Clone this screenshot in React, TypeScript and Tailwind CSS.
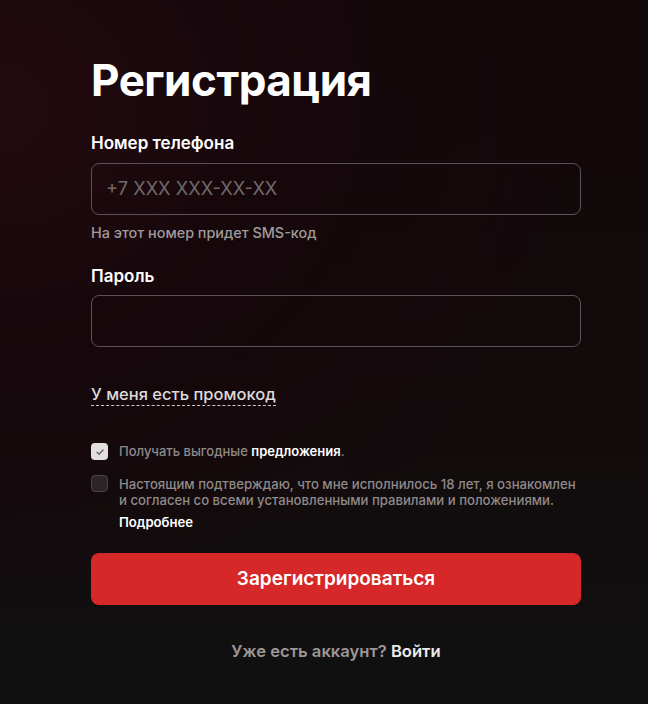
import React from "react";

export default function App() {
  return (
    <div
      className="min-h-[704px] w-full text-white"
      style={{
        fontFamily: "Inter, 'Noto Sans', sans-serif",
        background:
          "radial-gradient(ellipse 90% 75% at 0% 15%, #230a10 0%, #16070b 45%, rgba(17,17,17,0) 100%), linear-gradient(180deg, #120709 0%, #120a0b 55%, #111111 100%)",
      }}
    >
      <div className="pl-[91px] pt-[52px] w-[581px]">
        <h1 className="text-[44px] leading-[56px] font-bold tracking-[-0.5px]">Регистрация</h1>

        <div className="mt-[24px] text-[17px] leading-[22px] font-semibold">Номер телефона</div>
        <div className="mt-[9px] h-[52px] rounded-[8px] border border-[#5a5254] flex items-center px-[14px]">
          <span className="text-[18.3px] text-[#6f6a6b]">+7 XXX XXX-XX-XX</span>
        </div>
        <div className="mt-[9px] text-[14.4px] leading-[18px] font-medium text-[#a09a9b]">На этот номер придет SMS-код</div>

        <div className="mt-[23px] text-[17px] leading-[22px] font-semibold">Пароль</div>
        <div className="mt-[8px] h-[52px] rounded-[8px] border border-[#5a5254]"></div>

        <div className="mt-[35px]">
          <span className="text-[16.5px] leading-[22px] font-medium text-[#dedada] border-b border-dashed border-[#cfcaca] pb-[1px]">
            У меня есть промокод
          </span>
        </div>

        <div className="mt-[37px] flex items-start gap-[11px]">
          <div className="w-[17px] h-[17px] rounded-[4px] bg-[#e3dfdf] flex items-center justify-center shrink-0">
            <svg width="10" height="10" viewBox="0 0 10 10" fill="none">
              <path d="M2 5.2 L4.1 7.2 L8 3" stroke="#6a6466" strokeWidth="1.3" strokeLinecap="round" strokeLinejoin="round" />
            </svg>
          </div>
          <div className="text-[13px] leading-[17px] font-medium text-[#8f898a]">
            Получать выгодные <span className="text-white font-semibold">предложения</span>.
          </div>
        </div>

        <div className="mt-[15px] flex items-start gap-[11px]">
          <div className="w-[17px] h-[17px] rounded-[4px] bg-[#2c2527] border border-[#4a4244] shrink-0"></div>
          <div className="text-[13.15px] leading-[16px] font-medium text-[#8f898a] pt-[1px]">
            <div>
              Настоящим подтверждаю, что мне исполнилось 18 лет, я ознакомлен и согласен со всеми установленными
              правилами и положениями.
            </div>
            <div className="mt-[6px] text-white font-semibold">Подробнее</div>
          </div>
        </div>

        <button className="mt-[23px] w-full h-[52px] rounded-[8px] bg-[#d62828] text-[19px] font-semibold text-white">
          Зарегистрироваться
        </button>

        <div className="mt-[34px] text-center text-[16.6px] font-semibold text-[#9c9697]">
          Уже есть аккаунт? <span className="text-[#ececec]">Войти</span>
        </div>
      </div>
    </div>
  );
}
